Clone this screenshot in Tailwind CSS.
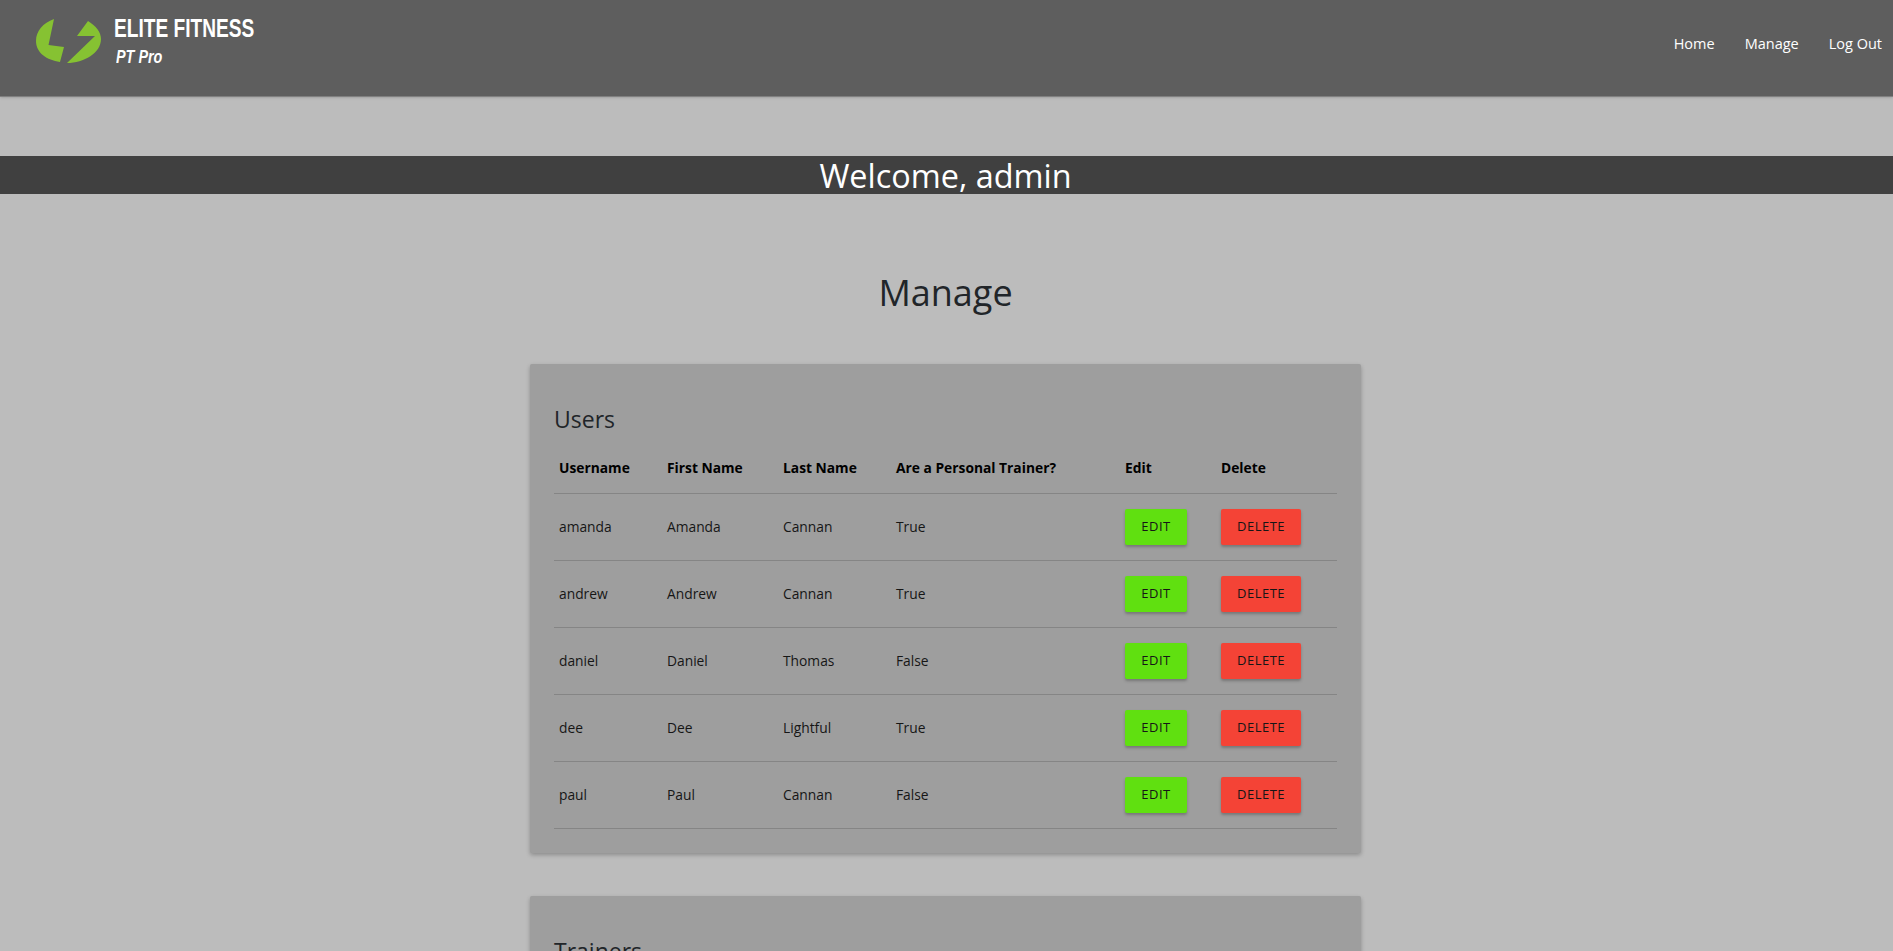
<!DOCTYPE html>
<html lang="en">

<head>
    <meta charset="UTF-8">
    <meta name="viewport" content="width=device-width, initial-scale=1.0">
    <title>Elite Fitness PT Pro</title>
    <script src="https://cdn.jsdelivr.net/npm/@tailwindcss/browser@4"></script>
</head>

<body class="h-screen overflow-hidden bg-[#bcbcbc] text-[#212529] font-['Open_Sans',sans-serif]">
    <header class="h-[97px] bg-[#5e5e5e] border-b border-[#808080] shadow-sm flex justify-between">
        <a class="flex pl-[36px] pt-[17px]" href="#">
            <svg class="w-[66px] h-[46px] mt-[2px]" viewBox="36 19 66 46">
                <path fill="#86c232" d="M54 19 L48.500 45 L64 47 L60 62 C47 60 36 53 36 41 C36 31 43 23 54 19 Z"/>
                <path fill="#86c232" d="M88 21 L77 36 L95 36 L67 63 C84 63 101 53 101 39 C101 32 96 26 88 21 Z"/>
            </svg>
            <div class="ml-[12px] -mt-[3px] text-white font-['Liberation_Sans',sans-serif]">
                <div class="text-[25px] leading-[28px] font-bold origin-left scale-x-[0.765]">ELITE FITNESS</div>
                <div class="text-[18px] leading-[24px] font-bold italic ml-[2px] mt-[3px] origin-left scale-x-[0.8]">PT Pro</div>
            </div>
        </a>
        <nav class="flex gap-[30px] pr-[11px] pt-[33px] text-[14.5px] leading-[22px] text-white">
            <a href="#">Home</a>
            <a href="#">Manage</a>
            <a href="#">Log Out</a>
        </nav>
    </header>

    <div class="mt-[59px] h-[38px] bg-[#404040] text-white text-center text-[32.4px] leading-[38px] pr-[2px]">Welcome, admin</div>

    <main class="flex flex-col items-center pr-[2px]">
        <h1 class="mt-[74px] text-[36px] leading-[50px]">Manage</h1>

        <section class="mt-[46px] w-[831px] bg-[#9e9e9e] rounded-[2px] shadow-[0_2px_4px_rgba(0,0,0,0.25)] px-[24px] pt-[41px] pb-[24px]">
            <h2 class="text-[23px] leading-[28px]">Users</h2>
            <table class="mt-[10px] w-[783px] table-fixed text-[13.8px] text-left text-[#161616]">
                <thead class="font-bold text-black">
                    <tr class="h-[50px] border-b border-[#858585]">
                        <th class="w-[108px] px-[5px] pt-[2px]">Username</th>
                        <th class="w-[116px] px-[5px] pt-[2px]">First Name</th>
                        <th class="w-[113px] px-[5px] pt-[2px]">Last Name</th>
                        <th class="w-[229px] px-[5px] pt-[2px]">Are a Personal Trainer?</th>
                        <th class="w-[96px] px-[5px] pt-[2px]">Edit</th>
                        <th class="w-[121px] px-[5px] pt-[2px]">Delete</th>
                    </tr>
                </thead>
                <tbody>
                    <tr class="h-[67px] border-b border-[#858585]">
                        <td class="px-[5px] pt-[1px]">amanda</td>
                        <td class="px-[5px] pt-[1px]">Amanda</td>
                        <td class="px-[5px] pt-[1px]">Cannan</td>
                        <td class="px-[5px] pt-[1px]">True</td>
                        <td class="px-[5px]"><button class="w-[62px] h-[36px] pt-[1px] rounded-[2px] bg-[#60e010] text-[13px] tracking-[0.5px] shadow-[0_2px_3px_rgba(0,0,0,0.25)]">EDIT</button></td>
                        <td class="px-[5px]"><button class="w-[80px] h-[36px] pt-[1px] rounded-[2px] bg-[#f44336] text-[13px] tracking-[0.5px] shadow-[0_2px_3px_rgba(0,0,0,0.25)]">DELETE</button></td>
                    </tr>
                    <tr class="h-[67px] border-b border-[#858585]">
                        <td class="px-[5px] pt-[1px]">andrew</td>
                        <td class="px-[5px] pt-[1px]">Andrew</td>
                        <td class="px-[5px] pt-[1px]">Cannan</td>
                        <td class="px-[5px] pt-[1px]">True</td>
                        <td class="px-[5px]"><button class="w-[62px] h-[36px] pt-[1px] rounded-[2px] bg-[#60e010] text-[13px] tracking-[0.5px] shadow-[0_2px_3px_rgba(0,0,0,0.25)]">EDIT</button></td>
                        <td class="px-[5px]"><button class="w-[80px] h-[36px] pt-[1px] rounded-[2px] bg-[#f44336] text-[13px] tracking-[0.5px] shadow-[0_2px_3px_rgba(0,0,0,0.25)]">DELETE</button></td>
                    </tr>
                    <tr class="h-[67px] border-b border-[#858585]">
                        <td class="px-[5px] pt-[1px]">daniel</td>
                        <td class="px-[5px] pt-[1px]">Daniel</td>
                        <td class="px-[5px] pt-[1px]">Thomas</td>
                        <td class="px-[5px] pt-[1px]">False</td>
                        <td class="px-[5px]"><button class="w-[62px] h-[36px] pt-[1px] rounded-[2px] bg-[#60e010] text-[13px] tracking-[0.5px] shadow-[0_2px_3px_rgba(0,0,0,0.25)]">EDIT</button></td>
                        <td class="px-[5px]"><button class="w-[80px] h-[36px] pt-[1px] rounded-[2px] bg-[#f44336] text-[13px] tracking-[0.5px] shadow-[0_2px_3px_rgba(0,0,0,0.25)]">DELETE</button></td>
                    </tr>
                    <tr class="h-[67px] border-b border-[#858585]">
                        <td class="px-[5px] pt-[1px]">dee</td>
                        <td class="px-[5px] pt-[1px]">Dee</td>
                        <td class="px-[5px] pt-[1px]">Lightful</td>
                        <td class="px-[5px] pt-[1px]">True</td>
                        <td class="px-[5px]"><button class="w-[62px] h-[36px] pt-[1px] rounded-[2px] bg-[#60e010] text-[13px] tracking-[0.5px] shadow-[0_2px_3px_rgba(0,0,0,0.25)]">EDIT</button></td>
                        <td class="px-[5px]"><button class="w-[80px] h-[36px] pt-[1px] rounded-[2px] bg-[#f44336] text-[13px] tracking-[0.5px] shadow-[0_2px_3px_rgba(0,0,0,0.25)]">DELETE</button></td>
                    </tr>
                    <tr class="h-[67px] border-b border-[#858585]">
                        <td class="px-[5px] pt-[1px]">paul</td>
                        <td class="px-[5px] pt-[1px]">Paul</td>
                        <td class="px-[5px] pt-[1px]">Cannan</td>
                        <td class="px-[5px] pt-[1px]">False</td>
                        <td class="px-[5px]"><button class="w-[62px] h-[36px] pt-[1px] rounded-[2px] bg-[#60e010] text-[13px] tracking-[0.5px] shadow-[0_2px_3px_rgba(0,0,0,0.25)]">EDIT</button></td>
                        <td class="px-[5px]"><button class="w-[80px] h-[36px] pt-[1px] rounded-[2px] bg-[#f44336] text-[13px] tracking-[0.5px] shadow-[0_2px_3px_rgba(0,0,0,0.25)]">DELETE</button></td>
                    </tr>
                </tbody>
            </table>
        </section>

        <section class="mt-[43px] w-[831px] bg-[#9e9e9e] rounded-[2px] shadow-[0_2px_4px_rgba(0,0,0,0.25)] px-[24px] pt-[41px] pb-[24px]">
            <h2 class="text-[23px] leading-[28px]">Trainers</h2>
        </section>
    </main>
</body>

</html>
